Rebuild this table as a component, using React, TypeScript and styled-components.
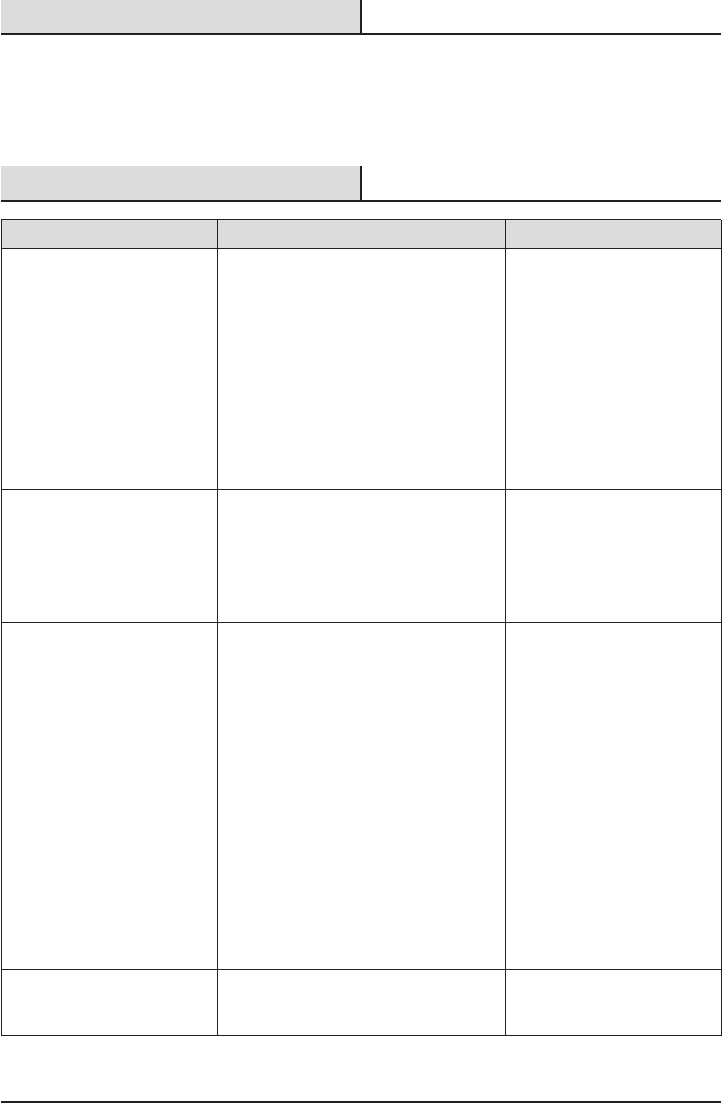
import React from "react";
import styled, { createGlobalStyle } from "styled-components";

const INK = "#231f20";
const SHADE = "#dcdcdc";

const GlobalStyle = createGlobalStyle`
  html, body {
    margin: 0;
    padding: 0;
    background: #ffffff;
    font-family: "Liberation Sans", Arial, sans-serif;
  }
`;

interface SectionProps {
  $height: number;
  $top?: number;
}

const SectionHeader: React.FC<SectionProps> = ({ $height, $top }) => {
  return (
    <S.Header $top={$top}>
      <S.HeaderTitle $height={$height} />
      <S.HeaderDivider />
      <S.HeaderRest />
    </S.Header>
  );
};

const rows = [241, 133, 347, 66];

const App: React.FC = () => {
  return (
    <>
      <GlobalStyle />
      <S.Page>
        <SectionHeader $height={33} />
        <SectionHeader $height={34} $top={131} />

        <S.Table>
          <S.HeadCell />
          <S.HeadCell />
          <S.HeadCell />
          {rows.map((h, i) => (
            <React.Fragment key={i}>
              <S.Cell $height={h} />
              <S.Cell $height={h} />
              <S.Cell $height={h} />
            </React.Fragment>
          ))}
        </S.Table>

        <S.FooterRule />
      </S.Page>
    </>
  );
};

const S = {
  Page: styled.div`
    width: 721px;
    padding-left: 1px;
    box-sizing: border-box;
  `,

  Header: styled.div<{ $top?: number }>`
    display: flex;
    margin-top: ${(props) => (props.$top ? props.$top + "px" : "0")};
    border-bottom: 2px solid ${INK};
  `,

  HeaderTitle: styled.div<{ $height: number }>`
    width: 359px;
    height: ${(props) => props.$height}px;
    background: ${SHADE};
  `,

  HeaderDivider: styled.div`
    width: 2px;
    background: ${INK};
  `,

  HeaderRest: styled.div`
    flex: 1;
  `,

  Table: styled.div`
    display: grid;
    grid-template-columns: 216px 288px 216px;
    margin-top: 17px;
    border-top: 1px solid ${INK};
    border-left: 1px solid ${INK};
  `,

  HeadCell: styled.div`
    height: 29px;
    box-sizing: border-box;
    background: ${SHADE};
    border-right: 1px solid ${INK};
    border-bottom: 1px solid ${INK};
  `,

  Cell: styled.div<{ $height: number }>`
    height: ${(props) => props.$height}px;
    box-sizing: border-box;
    border-right: 1px solid ${INK};
    border-bottom: 1px solid ${INK};
  `,

  FooterRule: styled.div`
    margin-top: 65px;
    height: 2px;
    background: ${INK};
  `,
};

export default App;
